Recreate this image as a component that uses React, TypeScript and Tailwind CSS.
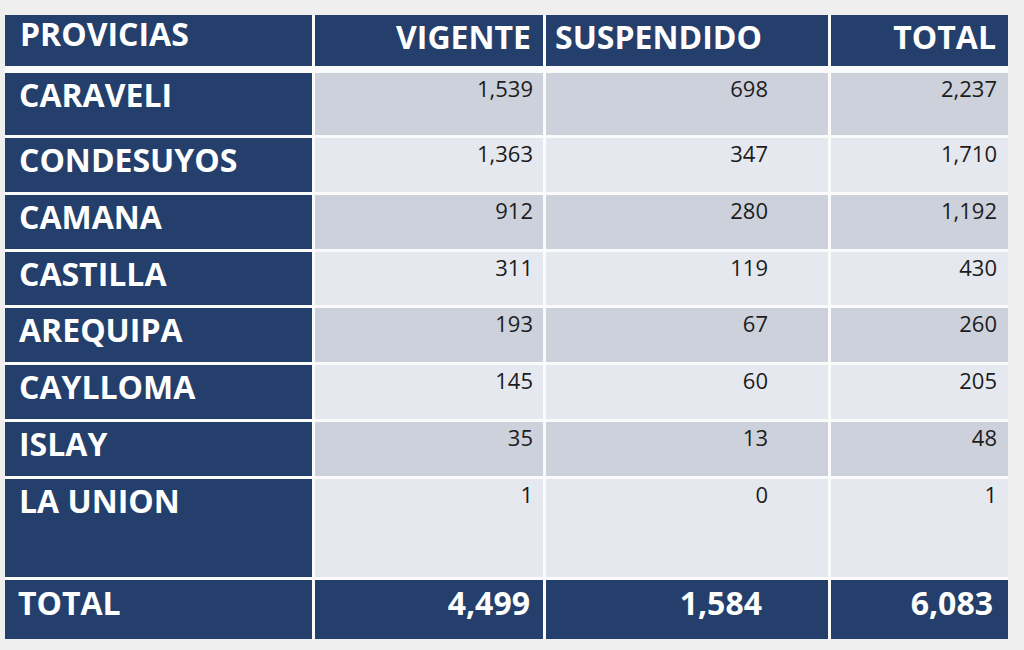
const ROWS = [
  { name: "CARAVELI", vigente: "1,539", suspendido: "698", total: "2,237", h: "h-[62px]", dark: true },
  { name: "CONDESUYOS", vigente: "1,363", suspendido: "347", total: "1,710", h: "h-[54px]", dark: false },
  { name: "CAMANA", vigente: "912", suspendido: "280", total: "1,192", h: "h-[54px]", dark: true },
  { name: "CASTILLA", vigente: "311", suspendido: "119", total: "430", h: "h-[53px]", dark: false },
  { name: "AREQUIPA", vigente: "193", suspendido: "67", total: "260", h: "h-[54px]", dark: true },
  { name: "CAYLLOMA", vigente: "145", suspendido: "60", total: "205", h: "h-[54px]", dark: false },
  { name: "ISLAY", vigente: "35", suspendido: "13", total: "48", h: "h-[54px]", dark: true },
  { name: "LA UNION", vigente: "1", suspendido: "0", total: "1", h: "h-[98px]", dark: false },
]

const GRID = "grid grid-cols-[307px_228px_282px_177px] gap-x-[3px]"
const NAVY = "bg-[#243f6b] text-white"

export default function App() {
  return (
    <div
      className="h-[650px] w-[1024px] bg-[#efefef] pl-[5px] pt-[15px]"
      style={{ fontFamily: '"Open Sans", "Noto Sans", sans-serif' }}
    >
      <div className="flex w-[1003px] flex-col gap-y-[3px] bg-[#fbfbfc]">
        {/* header */}
        <div className={`${GRID} mb-[4px] h-[51px] bg-[#fbfbfc]`}>
          <div className={`${NAVY} pl-[15px] pt-[3px] text-[32px] font-bold leading-[32px]`}>PROVICIAS</div>
          <div className={`${NAVY} pr-[12px] pt-[6px] text-right text-[32px] font-bold leading-[32px]`}>VIGENTE</div>
          <div className={`${NAVY} pl-[9px] pt-[6px] text-[32px] font-bold leading-[32px]`}>SUSPENDIDO</div>
          <div className={`${NAVY} pr-[12px] pt-[6px] text-right text-[32px] font-bold leading-[32px]`}>TOTAL</div>
        </div>

        {ROWS.map((r) => {
          const cell = r.dark ? "bg-[#cdd1db]" : "bg-[#e5e8ef]"
          return (
            <div key={r.name} className={`${GRID} ${r.h}`}>
              <div className={`${NAVY} pl-[14px] pt-[6px] text-[32px] font-bold leading-[32px]`}>{r.name}</div>
              <div className={`${cell} pr-[10px] pt-[4px] text-right text-[22px] leading-[22px] text-[#1c1c1c]`}>{r.vigente}</div>
              <div className={`${cell} pr-[60px] pt-[4px] text-right text-[22px] leading-[22px] text-[#1c1c1c]`}>{r.suspendido}</div>
              <div className={`${cell} pr-[11px] pt-[4px] text-right text-[22px] leading-[22px] text-[#1c1c1c]`}>{r.total}</div>
            </div>
          )
        })}

        {/* totals */}
        <div className={`${GRID} h-[59px]`}>
          <div className={`${NAVY} pl-[13px] pt-[7px] text-[32px] font-bold leading-[32px]`}>TOTAL</div>
          <div className={`${NAVY} pr-[13px] pt-[7px] text-right text-[32px] font-bold leading-[32px]`}>4,499</div>
          <div className={`${NAVY} pr-[66px] pt-[7px] text-right text-[32px] font-bold leading-[32px]`}>1,584</div>
          <div className={`${NAVY} pr-[15px] pt-[7px] text-right text-[32px] font-bold leading-[32px]`}>6,083</div>
        </div>
      </div>
    </div>
  )
}
